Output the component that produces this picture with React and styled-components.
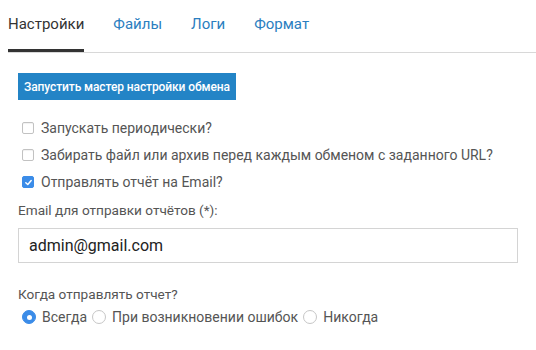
import React from "react";
import styled, { createGlobalStyle } from "styled-components";

const Global = createGlobalStyle`
  html, body { margin: 0; padding: 0; background: #fff; }
  body { font-family: Roboto, "Helvetica Neue", Arial, sans-serif; color: #555; }
  * { box-sizing: border-box; }
`;

const Page = styled.div`
  width: 536px;
  height: 350px;
  padding: 0 0 0 8px;
  overflow: hidden;
`;

const Tabs = styled.div`
  display: flex;
  border-bottom: 1px solid #d8d8d8;
  height: 53px;
  align-items: flex-start;
`;

const Tab = styled.div`
  font-size: 15px;
  color: ${p => (p.$active ? "#333" : "#2a7ec0")};
  padding-top: 15px;
  height: 52px;
  margin-right: 29px;
  border-bottom: 3px solid ${p => (p.$active ? "#333" : "transparent")};
  line-height: 18px;
  padding-right: ${p => (p.$active ? "0" : "0")};
`;

const Body = styled.div`
  padding: 20px 18px 0 10px;
  display: flex;
  flex-direction: column;
`;

const Button = styled.button`
  align-self: flex-start;
  background: #2384c6;
  color: #fff;
  border: none;
  font-family: Roboto, sans-serif;
  font-weight: 500;
  font-size: 12px;
  height: 27px;
  padding: 0 6px;
  letter-spacing: -0.1px;
`;

const Checks = styled.div`
  display: flex;
  flex-direction: column;
  gap: 9px;
  margin-top: 19px;
  margin-left: 4px;
`;

const CheckRow = styled.label`
  display: flex;
  align-items: center;
  gap: 7px;
  font-size: 14px;
  color: #555;
  line-height: 18px;
`;

const Box = styled.span`
  width: 12px;
  height: 12px;
  border-radius: 2px;
  border: 1px solid ${p => (p.$checked ? "#3b8ce8" : "#c2c2c2")};
  background: ${p => (p.$checked ? "#3b8ce8" : "#fff")};
  display: inline-flex;
  align-items: center;
  justify-content: center;
  flex: none;
  box-shadow: ${p => (p.$checked ? "none" : "inset 0 1px 1px rgba(0,0,0,0.06)")};
`;

const Label = styled.div`
  font-size: 13.6px;
  color: #555;
  margin-top: 11px;
  line-height: 16px;
`;

const Input = styled.div`
  margin-top: 10px;
  height: 35px;
  border: 1px solid #d4d4d4;
  display: flex;
  align-items: center;
  padding-left: 10px;
  font-size: 16px;
  color: #222;
`;

const Label2 = styled(Label)`
  margin-top: 23px;
`;

const Radios = styled.div`
  display: flex;
  align-items: center;
  margin-top: 6px;
  margin-left: 4px;
  font-size: 14px;
  color: #555;
  line-height: 18px;
`;

const RadioItem = styled.label`
  display: flex;
  align-items: center;
  gap: 6px;
  margin-right: 5px;
`;

const Dot = styled.span`
  width: 14px;
  height: 14px;
  border-radius: 50%;
  border: 1px solid ${p => (p.$checked ? "#3b8ce8" : "#c6c6c6")};
  background: ${p => (p.$checked ? "#3b8ce8" : "#fff")};
  display: inline-flex;
  align-items: center;
  justify-content: center;
  flex: none;
  &::after {
    content: "";
    display: ${p => (p.$checked ? "block" : "none")};
    width: 5px;
    height: 5px;
    border-radius: 50%;
    background: #fff;
  }
`;

const Check = () => (
  <svg width="9" height="9" viewBox="0 0 10 10">
    <path d="M2 5.2 L4.2 7.3 L8 2.8" fill="none" stroke="#fff" strokeWidth="1.6" strokeLinecap="round" strokeLinejoin="round" />
  </svg>
);

export default function App() {
  return (
    <Page>
      <Global />
      <Tabs>
        <Tab $active>Настройки</Tab>
        <Tab>Файлы</Tab>
        <Tab>Логи</Tab>
        <Tab>Формат</Tab>
      </Tabs>
      <Body>
        <Button>Запустить мастер настройки обмена</Button>
        <Checks>
          <CheckRow><Box />Запускать периодически?</CheckRow>
          <CheckRow><Box />Забирать файл или архив перед каждым обменом с заданного URL?</CheckRow>
          <CheckRow><Box $checked><Check /></Box>Отправлять отчёт на Email?</CheckRow>
        </Checks>
        <Label>Email для отправки отчётов (*):</Label>
        <Input>admin@gmail.com</Input>
        <Label2>Когда отправлять отчет?</Label2>
        <Radios>
          <RadioItem><Dot $checked />Всегда</RadioItem>
          <RadioItem><Dot />При возникновении ошибок</RadioItem>
          <RadioItem><Dot />Никогда</RadioItem>
        </Radios>
      </Body>
    </Page>
  );
}
